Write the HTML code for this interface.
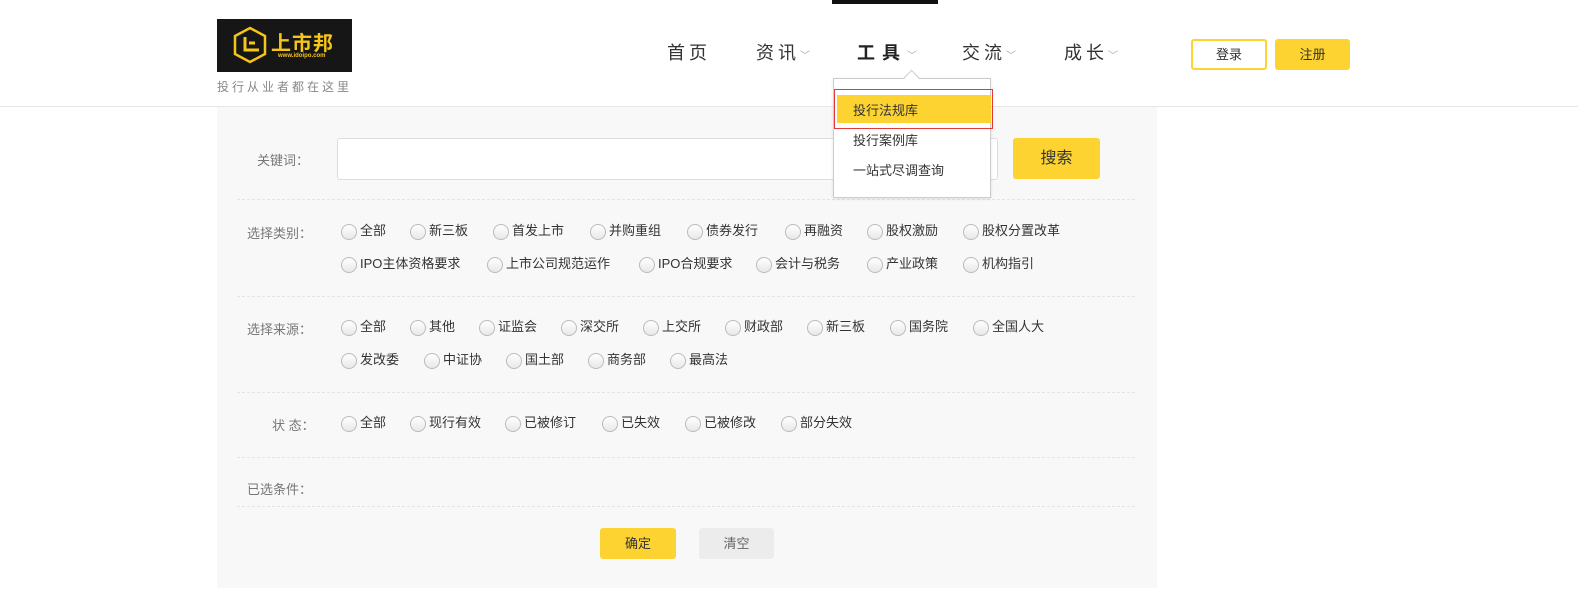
<!DOCTYPE html>
<html><head><meta charset="utf-8"><style>
*{margin:0;padding:0;box-sizing:border-box}
body{width:1578px;height:604px;background:#fff;position:relative;overflow:hidden;font-family:"Liberation Sans","Noto Sans CJK SC",sans-serif;color:#333}
.a{position:absolute;white-space:nowrap}
.hdr{position:absolute;left:0;top:106px;width:1578px;height:1px;background:#e6e6e6}
.panel{position:absolute;left:217px;top:107px;width:940px;height:481px;background:#f8f8f8}
.nav{font-size:18px;color:#333;letter-spacing:4px}
.car{font-size:10px;color:#aaa;letter-spacing:0}
.lbl{font-size:13px;color:#777}
.r{position:absolute;font-size:13px;color:#333;white-space:nowrap;padding-left:19px;line-height:16px}
.r:before{content:"";position:absolute;left:0;top:1px;width:14px;height:14px;border:1px solid #bbb;border-radius:50%;background:linear-gradient(#fff,#e8e8e8)}
.sep{position:absolute;left:237px;width:898px;border-top:1px dashed #e4e4e4}
</style></head><body>
<div class="a" style="left:832px;top:0;width:106px;height:4px;background:#111"></div>
<div class="a" style="left:217px;top:19px;width:135px;height:53px;background:#161616"></div>
<svg class="a" style="left:232px;top:26px" width="36" height="38" viewBox="0 0 36 38"><polygon points="18,2 33,10 33,28 18,36 3,28 3,10" fill="none" stroke="#f5c518" stroke-width="2.5"/><path d="M13 11v13h14M17 17h6" stroke="#f5c518" stroke-width="3" fill="none"/></svg>
<div class="a" style="left:271px;top:27px;font-size:20px;font-weight:bold;color:#f5c518;letter-spacing:1px">上市邦</div>
<div class="a" style="left:278px;top:53px;font-size:6px;color:#f5c518;font-weight:bold">www.idoipo.com</div>
<div class="a" style="left:217px;top:78px;font-size:12px;color:#888;letter-spacing:3px">投行从业者都在这里</div>
<div class="a nav" style="left:667px;top:39px">首页</div>
<div class="a nav" style="left:756px;top:39px">资讯<span class="car">﹀</span></div>
<div class="a nav" style="left:857px;top:39px;font-weight:bold;color:#222;letter-spacing:7px">工具<span class="car" style="font-weight:normal">﹀</span></div>
<div class="a nav" style="left:962px;top:39px">交流<span class="car">﹀</span></div>
<div class="a nav" style="left:1064px;top:39px">成长<span class="car">﹀</span></div>
<div class="a" style="left:1191px;top:39px;width:76px;height:31px;border:2px solid #fdd332;border-radius:3px;font-size:13px;text-align:center;line-height:27px">登录</div>
<div class="a" style="left:1275px;top:39px;width:75px;height:31px;background:#fdd332;border-radius:3px;font-size:13px;text-align:center;line-height:31px">注册</div>
<div class="hdr"></div>
<div class="panel"></div>
<div class="a lbl" style="left:257px;top:150px">关键词：</div>
<div class="a" style="left:337px;top:138px;width:661px;height:42px;background:#fff;border:1px solid #ddd;border-radius:3px"></div>
<div class="a" style="left:1013px;top:138px;width:87px;height:41px;background:#fdd332;border-radius:3px;font-size:16px;text-align:center;line-height:41px">搜索</div>
<div class="sep" style="top:199px"></div>
<div class="sep" style="top:296px"></div>
<div class="sep" style="top:392px"></div>
<div class="sep" style="top:457px"></div>
<div class="sep" style="top:506px"></div>
<div class="a lbl" style="left:247px;top:223px">选择类别：</div>
<div class="r" style="left:341px;top:223px">全部</div><div class="r" style="left:410px;top:223px">新三板</div><div class="r" style="left:493px;top:223px">首发上市</div><div class="r" style="left:590px;top:223px">并购重组</div><div class="r" style="left:687px;top:223px">债券发行</div><div class="r" style="left:785px;top:223px">再融资</div><div class="r" style="left:867px;top:223px">股权激励</div><div class="r" style="left:963px;top:223px">股权分置改革</div>
<div class="r" style="left:341px;top:256px">IPO主体资格要求</div><div class="r" style="left:487px;top:256px">上市公司规范运作</div><div class="r" style="left:639px;top:256px">IPO合规要求</div><div class="r" style="left:756px;top:256px">会计与税务</div><div class="r" style="left:867px;top:256px">产业政策</div><div class="r" style="left:963px;top:256px">机构指引</div>
<div class="a lbl" style="left:247px;top:319px">选择来源：</div>
<div class="r" style="left:341px;top:319px">全部</div><div class="r" style="left:410px;top:319px">其他</div><div class="r" style="left:479px;top:319px">证监会</div><div class="r" style="left:561px;top:319px">深交所</div><div class="r" style="left:643px;top:319px">上交所</div><div class="r" style="left:725px;top:319px">财政部</div><div class="r" style="left:807px;top:319px">新三板</div><div class="r" style="left:890px;top:319px">国务院</div><div class="r" style="left:973px;top:319px">全国人大</div>
<div class="r" style="left:341px;top:352px">发改委</div><div class="r" style="left:424px;top:352px">中证协</div><div class="r" style="left:506px;top:352px">国土部</div><div class="r" style="left:588px;top:352px">商务部</div><div class="r" style="left:670px;top:352px">最高法</div>
<div class="a lbl" style="left:272px;top:415px">状 态：</div>
<div class="r" style="left:341px;top:415px">全部</div><div class="r" style="left:410px;top:415px">现行有效</div><div class="r" style="left:505px;top:415px">已被修订</div><div class="r" style="left:602px;top:415px">已失效</div><div class="r" style="left:685px;top:415px">已被修改</div><div class="r" style="left:781px;top:415px">部分失效</div>
<div class="a lbl" style="left:247px;top:479px">已选条件：</div>
<div class="a" style="left:600px;top:528px;width:76px;height:31px;background:#fdd332;border-radius:3px;font-size:13px;text-align:center;line-height:31px">确定</div>
<div class="a" style="left:699px;top:528px;width:75px;height:31px;background:#ececec;border-radius:3px;font-size:13px;color:#666;text-align:center;line-height:31px">清空</div>
<div class="a" style="left:833px;top:78px;width:158px;height:120px;background:#fff;border:1px solid #ccc;box-shadow:0 1px 3px rgba(0,0,0,.1)"></div>
<div class="a" style="left:906px;top:72px;width:11px;height:11px;background:#fff;border-left:1px solid #ccc;border-top:1px solid #ccc;transform:rotate(45deg)"></div>
<div class="a" style="left:834px;top:89px;width:159px;height:40px;border:1px solid #e53935"></div>
<div class="a" style="left:837px;top:95px;width:154px;height:28px;background:#fdd332"></div>
<div class="a" style="left:853px;top:100px;font-size:13px">投行法规库</div>
<div class="a" style="left:853px;top:130px;font-size:13px">投行案例库</div>
<div class="a" style="left:853px;top:160px;font-size:13px">一站式尽调查询</div>
</body></html>
